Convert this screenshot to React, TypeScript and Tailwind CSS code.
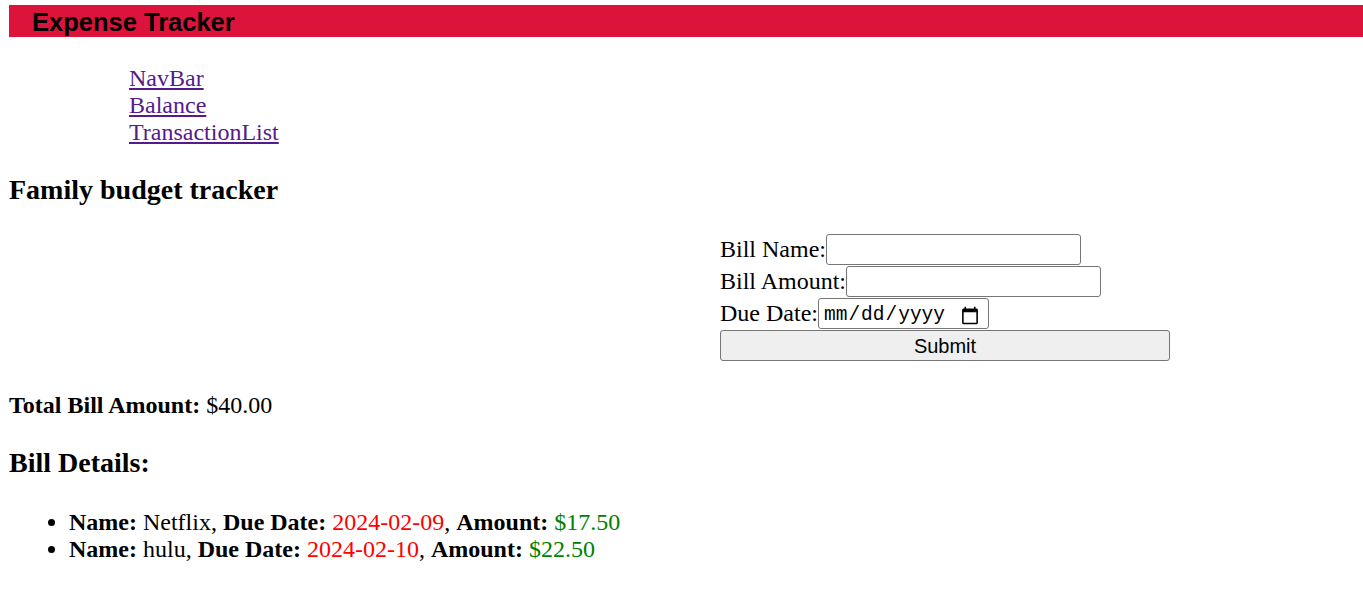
import React from "react";

const serif = "font-['Liberation_Serif','Times_New_Roman',serif]";

export default function App() {
  return (
    <div className={`pt-[5px] pl-[9px] bg-white text-black min-h-[593px] ${serif}`}>
      <header className="h-[32px] bg-[#DC143C] flex items-center pl-[23px]">
        <h1 className="font-['Liberation_Sans',Arial,sans-serif] font-bold text-[25.5px] leading-[32px] text-black pt-[1px]">
          Expense Tracker
        </h1>
      </header>

      <nav className="mt-[28px] pl-[120px] text-[24px] leading-[27px]">
        <ul className="flex flex-col">
          <li>
            <a href="#" className="text-[#551A8B] underline">NavBar</a>
          </li>
          <li>
            <a href="#" className="text-[#551A8B] underline">Balance</a>
          </li>
          <li>
            <a href="#" className="text-[#551A8B] underline">TransactionList</a>
          </li>
        </ul>
      </nav>

      <h2 className="mt-[28px] text-[28px] leading-[32px] font-bold">Family budget tracker</h2>

      <form className="mt-[28px] ml-[711px] w-[450px] flex flex-col text-[24px]">
        <div className="h-[32px] flex items-start">
          <label className="leading-[31px]">Bill Name:</label>
          <input
            type="text"
            className="w-[255px] h-[31px] border border-[#767676] rounded-[3px] bg-white px-[3px] text-[20px] font-['Liberation_Sans',Arial,sans-serif]"
          />
        </div>
        <div className="h-[32px] flex items-start">
          <label className="leading-[31px]">Bill Amount:</label>
          <input
            type="number"
            className="w-[255px] h-[31px] border border-[#767676] rounded-[3px] bg-white px-[3px] text-[20px] font-['Liberation_Sans',Arial,sans-serif]"
          />
        </div>
        <div className="h-[32px] flex items-start">
          <label className="leading-[31px]">Due Date:</label>
          <input
            type="date"
            className="w-[171px] h-[31px] border border-[#767676] rounded-[3px] bg-white pl-[4px] pr-[6px] pt-[4px] pb-0 text-[19.5px] font-['Liberation_Mono','DejaVu_Sans_Mono',monospace]"
          />
        </div>
        <div className="h-[32px] flex items-start">
          <button
            type="button"
            className="w-[450px] h-[31px] border border-[#767676] rounded-[3px] bg-[#EFEFEF] text-[20px] leading-[29px] pt-[1px] font-['Liberation_Sans',Arial,sans-serif] text-black"
          >
            Submit
          </button>
        </div>
      </form>

      <p className="mt-[30px] text-[24px] leading-[27px]">
        <strong>Total Bill Amount:</strong> $40.00
      </p>

      <h3 className="mt-[28px] text-[28px] leading-[32px] font-bold">Bill Details:</h3>

      <ul className="mt-[30px] pl-[60px] list-disc text-[24px] leading-[27px]">
        <li>
          <strong>Name:</strong> Netflix, <strong>Due Date:</strong>{" "}
          <span className="text-[#FF0000]">2024-02-09</span>, <strong>Amount:</strong>{" "}
          <span className="text-[#008000]">$17.50</span>
        </li>
        <li>
          <strong>Name:</strong> hulu, <strong>Due Date:</strong>{" "}
          <span className="text-[#FF0000]">2024-02-10</span>, <strong>Amount:</strong>{" "}
          <span className="text-[#008000]">$22.50</span>
        </li>
      </ul>
    </div>
  );
}
